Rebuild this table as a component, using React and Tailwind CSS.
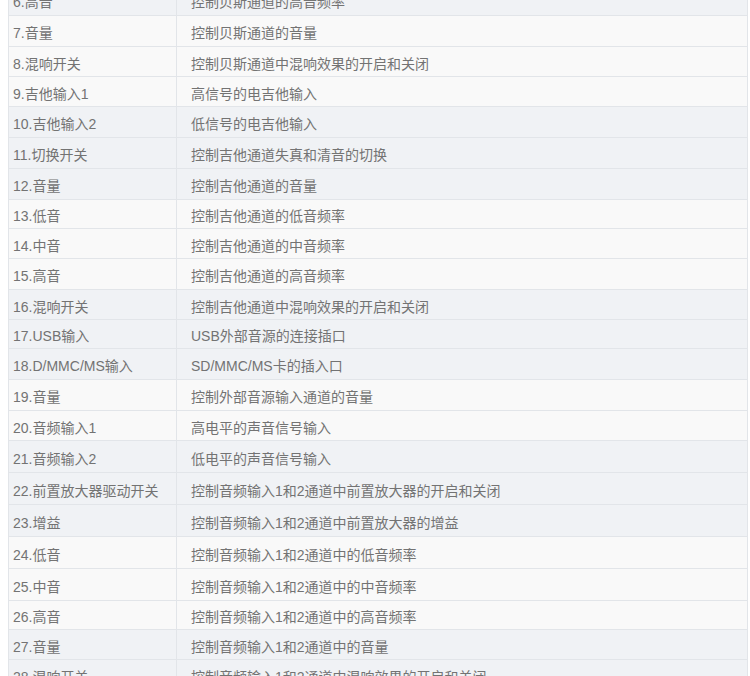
import React from 'react';

const rows = [
    { name: '6.高音', desc: '控制贝斯通道的高音频率', h: 'h-[31px]', shade: true },
    { name: '7.音量', desc: '控制贝斯通道的音量', h: 'h-[31px]' },
    { name: '8.混响开关', desc: '控制贝斯通道中混响效果的开启和关闭', h: 'h-[30px]' },
    { name: '9.吉他输入1', desc: '高信号的电吉他输入', h: 'h-[30px]' },
    { name: '10.吉他输入2', desc: '低信号的电吉他输入', h: 'h-[31px]', shade: true },
    { name: '11.切换开关', desc: '控制吉他通道失真和清音的切换', h: 'h-[31px]', shade: true },
    { name: '12.音量', desc: '控制吉他通道的音量', h: 'h-[31px]', shade: true },
    { name: '13.低音', desc: '控制吉他通道的低音频率', h: 'h-[29px]' },
    { name: '14.中音', desc: '控制吉他通道的中音频率', h: 'h-[30px]' },
    { name: '15.高音', desc: '控制吉他通道的高音频率', h: 'h-[31px]' },
    { name: '16.混响开关', desc: '控制吉他通道中混响效果的开启和关闭', h: 'h-[30px]', shade: true },
    { name: '17.USB输入', desc: 'USB外部音源的连接插口', h: 'h-[29px]', shade: true },
    { name: '18.D/MMC/MS输入', desc: 'SD/MMC/MS卡的插入口', h: 'h-[31px]', shade: true },
    { name: '19.音量', desc: '控制外部音源输入通道的音量', h: 'h-[31px]' },
    { name: '20.音频输入1', desc: '高电平的声音信号输入', h: 'h-[30px]' },
    { name: '21.音频输入2', desc: '低电平的声音信号输入', h: 'h-[32px]', shade: true },
    { name: '22.前置放大器驱动开关', desc: '控制音频输入1和2通道中前置放大器的开启和关闭', h: 'h-[32px]', shade: true },
    { name: '23.增益', desc: '控制音频输入1和2通道中前置放大器的增益', h: 'h-[32px]', shade: true },
    { name: '24.低音', desc: '控制音频输入1和2通道中的低音频率', h: 'h-[32px]' },
    { name: '25.中音', desc: '控制音频输入1和2通道中的中音频率', h: 'h-[32px]' },
    { name: '26.高音', desc: '控制音频输入1和2通道中的高音频率', h: 'h-[29px]' },
    { name: '27.音量', desc: '控制音频输入1和2通道中的音量', h: 'h-[30px]', shade: true },
    { name: '28.混响开关', desc: '控制音频输入1和2通道中混响效果的开启和关闭', h: 'h-[31px]', shade: true },
];

const App = () => {
    return (
        <div className="w-[750px] h-[676px] overflow-hidden bg-white">
            <div
                className="-mt-[15px] ml-[8px] w-[740px] border-x border-[#e2e5e9] text-[14px] text-[#737373] leading-none"
                style={{ fontFamily: '"Liberation Sans", "Noto Sans CJK SC", sans-serif' }}
            >
                {rows.map((row, index) => (
                    <div
                        key={index}
                        className={`flex border-b border-[#e2e5e9] ${row.h} ${row.shade ? 'bg-[#f0f2f5]' : 'bg-[#f9f9f9]'}`}
                    >
                        <div className="w-[168px] shrink-0 flex items-center pt-1 pl-[4px] border-r border-[#e2e5e9] whitespace-nowrap">
                            {row.name}
                        </div>
                        <div className="flex-1 flex items-center pt-1 pl-[14px] whitespace-nowrap">
                            {row.desc}
                        </div>
                    </div>
                ))}
            </div>
        </div>
    );
};

export default App;
